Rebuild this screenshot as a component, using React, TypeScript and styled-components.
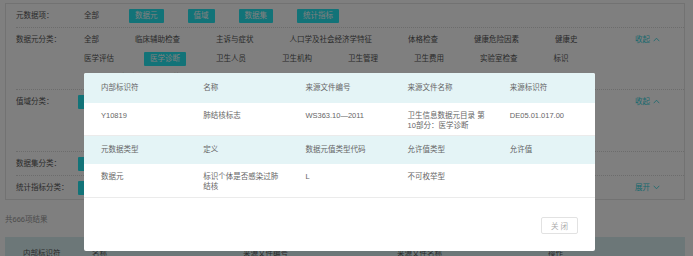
import React from "react";
import styled, { createGlobalStyle } from "styled-components";

const GlobalStyle = createGlobalStyle`
  html, body { margin: 0; padding: 0; background: #ffffff; }
  body {
    font-family: "Liberation Sans", "Noto Sans CJK SC", sans-serif;
    font-size: 7.5px;
    color: #333;
  }
  * { box-sizing: border-box; }
`;

const TEAL = "#24e6f0";
const TEAL_TEXT = "#2fd2dc";

const Page = styled.div`
  position: relative;
  width: 693px;
  height: 256px;
  overflow: hidden;
  padding: 3px 8px 0 5px;
`;

const FilterPanel = styled.div`
  border: 1px solid #e4e4e4;
  padding-left: 10px;
`;

const FilterRow = styled.div<{ $last?: boolean }>`
  display: flex;
  align-items: flex-start;
  padding: 4.5px 0;
  border-bottom: ${(p) => (p.$last ? "none" : "1px dotted #d8d8d8")};
`;

const RowLabel = styled.div`
  flex: none;
  width: 62px;
  line-height: 14px;
  color: #555;
`;

const Options = styled.div`
  flex: 1;
  display: flex;
  flex-wrap: wrap;
  row-gap: 5px;
`;

const Option = styled.span<{ $active?: boolean }>`
  height: 14px;
  line-height: 14px;
  padding: 0 6px;
  margin-right: 24px;
  white-space: nowrap;
  color: ${(p) => (p.$active ? "#fff" : "#555")};
  background: ${(p) => (p.$active ? TEAL : "transparent")};
  border-radius: 1px;
`;

const Toggle = styled.div`
  flex: none;
  width: 49px;
  line-height: 14px;
  color: ${TEAL_TEXT};
  display: flex;
  align-items: center;
  gap: 3px;
`;

const ResultCount = styled.div`
  padding: 13px 0 10px;
  line-height: 14px;
  color: #999;
`;

const ResultHeader = styled.div`
  display: grid;
  grid-template-columns: 69px 151px 154px 151px 1fr;
  padding-left: 18px;
  height: 30px;
  align-items: center;
  background: #d8eef0;
  color: #555;
`;

const Mask = styled.div`
  position: absolute;
  inset: 0;
  background: rgba(0, 0, 0, 0.5);
`;

const Modal = styled.div`
  position: absolute;
  top: 73px;
  left: 84px;
  width: 511px;
  background: #fff;
  border-radius: 2px;
  overflow: hidden;
`;

const DetailGrid = styled.div`
  display: grid;
  grid-template-columns: repeat(5, 1fr);
`;

const HeadCell = styled.div<{ $h: number }>`
  height: ${(p) => p.$h}px;
  display: flex;
  align-items: center;
  padding: 0 6px 0 17px;
  background: #e4f4f6;
  color: #666;
  line-height: 10px;
`;

const DataCell = styled.div<{ $h: number }>`
  height: ${(p) => p.$h}px;
  padding: 8px 6px 0 17px;
  line-height: 10px;
  color: #666;
  border-bottom: 1px solid #ebebeb;
`;

const Footer = styled.div`
  display: flex;
  justify-content: flex-end;
  padding: 19px 17px 17px;
`;

const CloseButton = styled.button`
  width: 37px;
  height: 17px;
  padding: 0;
  border: 1px solid #e2e2e2;
  border-radius: 2px;
  background: #fff;
  color: #aaa;
  font-family: inherit;
  font-size: 7.5px;
  letter-spacing: 2px;
  text-indent: 2px;
`;

const Chevron = ({ up }: { up?: boolean }) => (
  <svg width="7" height="5" viewBox="0 0 7 5" fill="none">
    <path
      d={up ? "M0.7 4.2 L3.5 1.2 L6.3 4.2" : "M0.7 0.8 L3.5 3.8 L6.3 0.8"}
      stroke={TEAL_TEXT}
      strokeWidth="0.8"
    />
  </svg>
);

const rows = [
  {
    label: "元数据项：",
    items: ["全部", "数据元", "值域", "数据集", "统计指标"],
    active: [1, 2, 3, 4],
  },
  {
    label: "数据元分类：",
    items: [
      "全部", "临床辅助检查", "主诉与症状", "人口学及社会经济学特征", "体格检查", "健康危险因素", "健康史",
      "医学评估", "医学诊断", "卫生人员", "卫生机构", "卫生管理", "卫生费用", "实验室检查", "标识",
      "计划与干预措施", "药品与材料",
    ],
    active: [8],
    toggle: "收起",
    up: true,
  },
  {
    label: "值域分类：",
    items: [
      "全部", "人口学及社会经济学特征", "健康史", "健康危险因素", "主诉与症状", "体格检查",
      "临床辅助检查", "实验室检查", "医学诊断", "医学评估", "计划与干预", "卫生费用",
      "卫生机构", "卫生人员", "卫生管理", "药品设备与材料", "标识",
    ],
    active: [0],
    toggle: "收起",
    up: true,
  },
  { label: "数据集分类：", items: ["全部", "基本数据集", "共享文档"], active: [0] },
  {
    label: "统计指标分类：",
    items: ["全部", "卫生资源", "医疗服务"],
    active: [0],
    toggle: "展开",
    up: false,
  },
];

const head1 = ["内部标识符", "名称", "来源文件编号", "来源文件名称", "来源标识符"];
const data1 = ["Y10819", "肺结核标志", "WS363.10—2011", "卫生信息数据元目录 第10部分：医学诊断", "DE05.01.017.00"];
const head2 = ["元数据类型", "定义", "数据元值类型代码", "允许值类型", "允许值"];
const data2 = ["数据元", "标识个体是否感染过肺结核", "L", "不可枚举型", ""];

export default function App() {
  return (
    <>
      <GlobalStyle />
      <Page>
        <FilterPanel>
          {rows.map((r, i) => (
            <FilterRow key={r.label} $last={i === rows.length - 1}>
              <RowLabel>{r.label}</RowLabel>
              <Options>
                {r.items.map((it, j) => (
                  <Option key={it + j} $active={r.active.includes(j)}>
                    {it}
                  </Option>
                ))}
              </Options>
              {r.toggle ? (
                <Toggle>
                  {r.toggle}
                  <Chevron up={r.up} />
                </Toggle>
              ) : null}
            </FilterRow>
          ))}
        </FilterPanel>
        <ResultCount>共666项结果</ResultCount>
        <ResultHeader>
          <span>内部标识符</span>
          <span>名称</span>
          <span>来源文件编号</span>
          <span>来源文件名称</span>
          <span>操作</span>
        </ResultHeader>
        <Mask />
        <Modal>
          <DetailGrid>
            {head1.map((t) => (
              <HeadCell key={t} $h={30}>{t}</HeadCell>
            ))}
            {data1.map((t) => (
              <DataCell key={t} $h={33}>{t}</DataCell>
            ))}
            {head2.map((t) => (
              <HeadCell key={t} $h={28}>{t}</HeadCell>
            ))}
            {data2.map((t, i) => (
              <DataCell key={"d2" + i} $h={34}>{t}</DataCell>
            ))}
          </DetailGrid>
          <Footer>
            <CloseButton>关闭</CloseButton>
          </Footer>
        </Modal>
      </Page>
    </>
  );
}
